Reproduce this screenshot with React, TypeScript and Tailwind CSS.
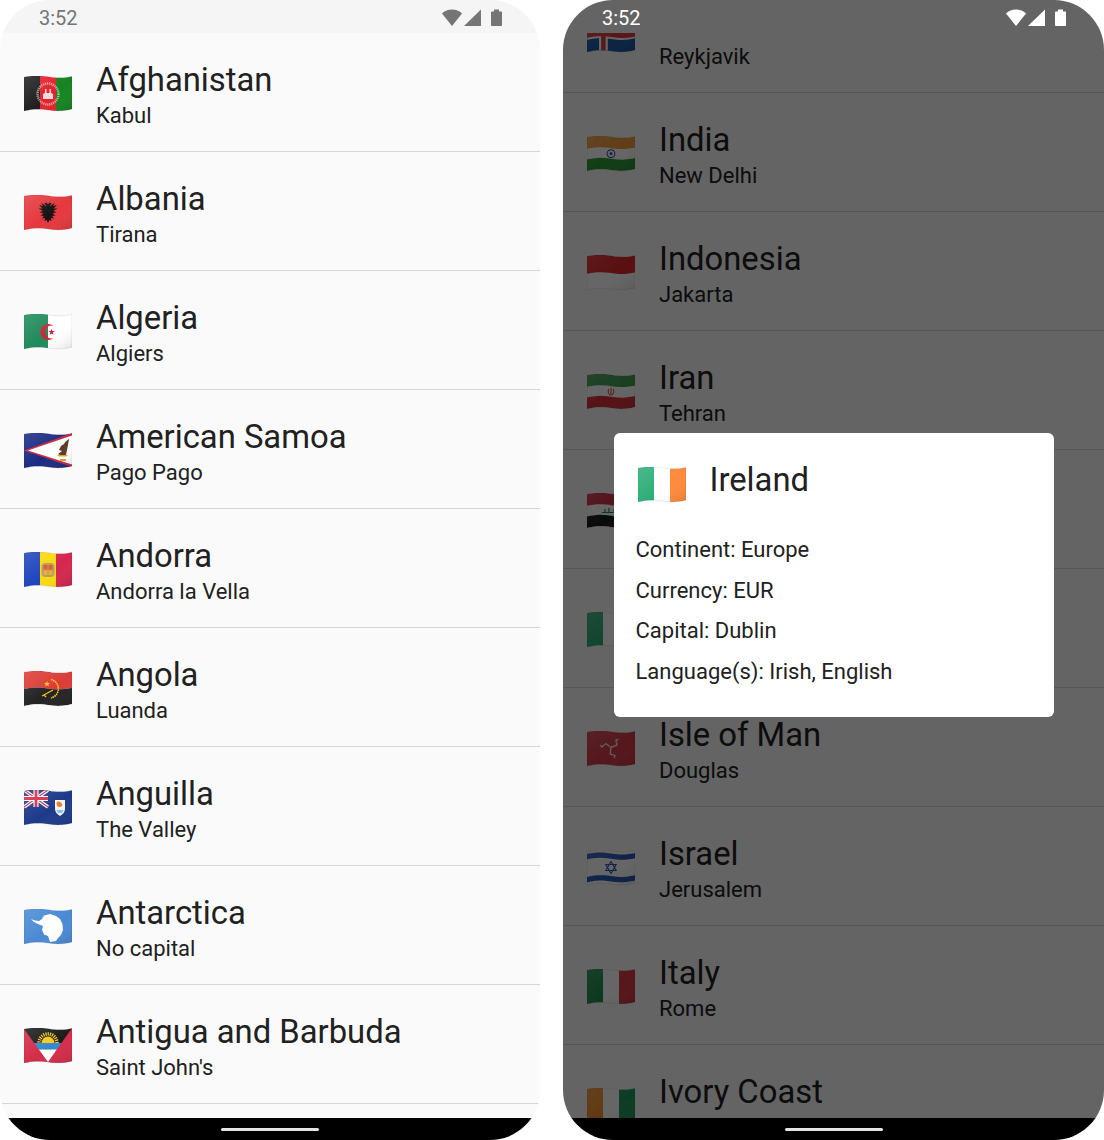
import type { ReactNode } from 'react';

// wave edges of the flag, in a 48x36 box
const wave = (x: number) => Math.sin((x / 48) * Math.PI * 2);
const topEdge = (x: number) => 1.2 - 1.2 * wave(x) - x * 0.015;
const bottomEdge = (x: number) => 35 - 1.3 * wave(x) - x * 0.04;

const edge = (t: number, x: number) => topEdge(x) + (bottomEdge(x) - topEdge(x)) * t;

function band(t0: number, t1: number) {
    const xs = Array.from({ length: 25 }, (_, i) => i * 2);
    const upper = xs.map((x) => `${x} ${edge(t0, x).toFixed(2)}`).join(' L');
    const lower = [...xs].reverse().map((x) => `${x} ${edge(t1, x).toFixed(2)}`).join(' L');
    return `M${upper} L${lower} Z`;
}

const outline = band(0, 1);

function Flag({ id, bg, children }: { id: string; bg?: string; children?: ReactNode }) {
    return (
        <svg viewBox="0 0 48 36" className="w-12 h-9 shrink-0">
            <defs>
                <clipPath id={`clip-${id}`}>
                    <path d={outline} />
                </clipPath>
                <linearGradient id={`shade-${id}`} x1="0" y1="0" x2="1" y2="1">
                    <stop offset="0" stopColor="#fff" stopOpacity="0.14" />
                    <stop offset="0.55" stopColor="#fff" stopOpacity="0" />
                    <stop offset="1" stopColor="#000" stopOpacity="0.12" />
                </linearGradient>
            </defs>
            <g clipPath={`url(#clip-${id})`}>
                <rect width="48" height="36" fill={bg ?? '#fff'} />
                {children}
                <rect width="48" height="36" fill={`url(#shade-${id})`} />
            </g>
            <path d={outline} fill="none" stroke="#000" strokeOpacity="0.12" strokeWidth="0.7" />
        </svg>
    );
}

function Bars({ colors }: { colors: string[] }) {
    return (
        <>
            {colors.map((c, i) => (
                <rect key={i} x={i * 16} width="16.2" height="36" fill={c} />
            ))}
        </>
    );
}

function Stripes({ stops }: { stops: [number, number, string][] }) {
    return (
        <>
            {stops.map(([a, b, c], i) => (
                <path key={i} d={band(a, b)} fill={c} />
            ))}
        </>
    );
}

const eagleHalf =
    'M24 28L22.5 25 20.5 26 21 23 18 23.5 20 21 16.5 20.5 19.5 18.5 15.5 17 19 16 14.5 13.5 18.5 13.5 15 10 19 11 17 7.5 21 10.5 22 12 21.5 9.5 20 9 22 7.5 23.5 8.5 24 10Z';
const manLeg = 'M24 16.5L30 14 29 9 31.5 8.5';

const flags: Record<string, (id: string) => ReactNode> = {
    afghanistan: (id) => (
        <Flag id={id}>
            <Bars colors={['#1f1f1f', '#e8202a', '#15841f']} />
            <circle cx="24" cy="18" r="10.5" fill="none" stroke="#d2d2d2" strokeOpacity="0.75" strokeWidth="2.4" strokeDasharray="1.2 0.8" />
            <path d="M19 23h10v-5l-2-1v-4h-1.5v4h-3v-4H21v4l-2 1z" fill="#f5dcdc" />
        </Flag>
    ),
    albania: (id) => (
        <Flag id={id} bg="#e5383d">
            <path d={eagleHalf} fill="#141414" />
            <path d={eagleHalf} fill="#141414" transform="matrix(-1 0 0 1 48 0)" />
        </Flag>
    ),
    algeria: (id) => (
        <Flag id={id}>
            <rect width="24" height="36" fill="#1f8a5b" />
            <path d="M29.5 11.8A8 8 0 1 0 29.5 24.2A6.5 6.5 0 1 1 29.5 11.8Z" fill="#d5203a" />
            <path d="M27.5 14.8l.9 2.2 2.4.1-1.9 1.5.7 2.3-2-1.3-2 1.3.7-2.3-1.9-1.5 2.4-.1z" fill="#d5203a" />
        </Flag>
    ),
    samoa: (id) => (
        <Flag id={id} bg="#1c2a83">
            <path d="M48 0L0 17.5 48 34z" fill="#c6283f" />
            <path d="M48 2.5L4 17.5 48 31.5z" fill="#fff" />
            <path d="M45 6c-2 1-4 3-5 5l-3 2-2 4 3 1-4 3 2 1h6l1-5 1-5z" fill="#5a3a25" />
            <path d="M33 22h11l-2 1.5h-7zM36 26h6v2h-6z" fill="#d9a520" />
        </Flag>
    ),
    andorra: (id) => (
        <Flag id={id}>
            <Bars colors={['#1f45bd', '#fbd90e', '#d5264f']} />
            <rect x="17.5" y="11" width="13" height="14" rx="4" fill="#b89a6a" />
            <rect x="19.5" y="13" width="4" height="4.5" fill="#e05a2c" />
            <rect x="24.5" y="13" width="4" height="4.5" fill="#e05a2c" />
            <rect x="19.5" y="18.5" width="4" height="4.5" fill="#e8b030" />
            <rect x="24.5" y="18.5" width="4" height="4.5" fill="#e8b030" />
        </Flag>
    ),
    angola: (id) => (
        <Flag id={id}>
            <Stripes stops={[[0, 0.5, '#dc3c36'], [0.5, 1, '#232323']]} />
            <path d="M27 8.5a9.5 9.5 0 0 1 0 18.5" fill="none" stroke="#f5c518" strokeWidth="1.6" strokeDasharray="1.6 0.6" />
            <path d="M18 25l11-6M20 24l2 2" stroke="#f5c518" strokeWidth="1.4" fill="none" />
            <path d="M23 10l.8 2 2.2.1-1.7 1.3.6 2.1-1.9-1.2-1.9 1.2.6-2.1-1.7-1.3 2.2-.1z" fill="#f5c518" />
        </Flag>
    ),
    anguilla: (id) => (
        <Flag id={id} bg="#1d3a8a">
            <rect width="24" height="17" fill="#2a3f8f" />
            <path d="M0 0l24 17M24 0L0 17" stroke="#fff" strokeWidth="3.4" />
            <path d="M0 0l24 17M24 0L0 17" stroke="#d8304a" strokeWidth="1.2" />
            <path d="M12 0v17M0 8.5h24" stroke="#fff" strokeWidth="5" />
            <path d="M12 0v17M0 8.5h24" stroke="#d8304a" strokeWidth="2.8" />
            <path d="M31 10h10v9c0 3-2 5-5 7-3-2-5-4-5-7z" fill="#f5f5f5" />
            <path d="M33 12c2-1 4 0 5 2s-1 3-3 3-3-3-2-5z" fill="#e8842c" />
            <path d="M32.5 20h7l-1.5 3h-4z" fill="#8ac0e8" />
        </Flag>
    ),
    antarctica: (id) => (
        <Flag id={id} bg="#4a8ad4">
            <path d="M7 10L11 11.5 15 12 18 10 20 6.5 26 5 32 7 36 10 38.5 15 39 21 37 26 34 29 32 32 26 33 25 30 24 27 20 25.5 18 21 19 17 14 15 10 13Z" fill="#fff" />
        </Flag>
    ),
    antigua: (id) => (
        <Flag id={id} bg="#1c1c1c">
            <circle cx="24" cy="15" r="9" fill="none" stroke="#f8c91c" strokeWidth="3.5" strokeDasharray="1.2 1" />
            <circle cx="24" cy="15" r="6.5" fill="#f8c91c" />
            <rect y="15" width="48" height="6.5" fill="#2f8bd4" />
            <rect y="21.5" width="48" height="15" fill="#fff" />
            <path d="M0 1l24 33L48 0v36H0z" fill="#d42c48" />
        </Flag>
    ),
    iceland: (id) => (
        <Flag id={id} bg="#1d5aa8">
            <Stripes stops={[[0.36, 0.64, '#fff']]} />
            <rect x="12" width="8.8" height="36" fill="#fff" />
            <Stripes stops={[[0.42, 0.58, '#e0393e']]} />
            <rect x="14.2" width="4.4" height="36" fill="#e0393e" />
        </Flag>
    ),
    india: (id) => (
        <Flag id={id}>
            <Stripes stops={[[0, 0.34, '#f59a3a'], [0.66, 1, '#2b9a34']]} />
            <circle cx="24" cy="17.7" r="4" fill="none" stroke="#2a3f9f" strokeWidth="1" />
            <circle cx="24" cy="17.7" r="1.4" fill="#2a3f9f" />
        </Flag>
    ),
    indonesia: (id) => (
        <Flag id={id}>
            <Stripes stops={[[0, 0.52, '#e2262a']]} />
        </Flag>
    ),
    iran: (id) => (
        <Flag id={id}>
            <Stripes stops={[[0, 0.34, '#3f9d52'], [0.66, 1, '#d8303a']]} />
            <path d="M24 14v8M21.7 15c-1 2-.6 5 1.3 6M26.3 15c1 2 .6 5-1.3 6" stroke="#d8303a" strokeWidth="1" fill="none" />
        </Flag>
    ),
    iraq: (id) => (
        <Flag id={id}>
            <Stripes stops={[[0, 0.34, '#d12a40'], [0.66, 1, '#1a1a1a']]} />
            <path d="M15 19.5h18M18 16v3M22 15v4M27 15.5v4M31 16v3" stroke="#1e8a4a" strokeWidth="1.2" fill="none" />
        </Flag>
    ),
    ireland: (id) => (
        <Flag id={id}>
            <Bars colors={['#2fae78', '#ffffff', '#ff8a3c']} />
        </Flag>
    ),
    isleofman: (id) => (
        <Flag id={id} bg="#d63a48">
            <g fill="none" stroke="#f0e4d8" strokeWidth="1.4">
                <path d={manLeg} />
                <path d={manLeg} transform="rotate(120 24 16.5)" />
                <path d={manLeg} transform="rotate(240 24 16.5)" />
            </g>
        </Flag>
    ),
    israel: (id) => (
        <Flag id={id}>
            <Stripes stops={[[0.08, 0.24, '#2a55b8'], [0.76, 0.92, '#2a55b8']]} />
            <path d="M24 11.5l5.2 9h-10.400zM24 23.5l-5.200-9h10.400z" fill="none" stroke="#2a55b8" strokeWidth="1.1" />
        </Flag>
    ),
    italy: (id) => (
        <Flag id={id}>
            <Bars colors={['#1f8f4f', '#ffffff', '#d93a46']} />
        </Flag>
    ),
    ivorycoast: (id) => (
        <Flag id={id}>
            <Bars colors={['#f5912a', '#ffffff', '#1f9a5a']} />
        </Flag>
    ),
};

const leftList = [
    ['afghanistan', 'Afghanistan', 'Kabul'],
    ['albania', 'Albania', 'Tirana'],
    ['algeria', 'Algeria', 'Algiers'],
    ['samoa', 'American Samoa', 'Pago Pago'],
    ['andorra', 'Andorra', 'Andorra la Vella'],
    ['angola', 'Angola', 'Luanda'],
    ['anguilla', 'Anguilla', 'The Valley'],
    ['antarctica', 'Antarctica', 'No capital'],
    ['antigua', 'Antigua and Barbuda', "Saint John's"],
];

const rightList = [
    ['iceland', 'Iceland', 'Reykjavik'],
    ['india', 'India', 'New Delhi'],
    ['indonesia', 'Indonesia', 'Jakarta'],
    ['iran', 'Iran', 'Tehran'],
    ['iraq', 'Iraq', 'Baghdad'],
    ['ireland', 'Ireland', 'Dublin'],
    ['isleofman', 'Isle of Man', 'Douglas'],
    ['israel', 'Israel', 'Jerusalem'],
    ['italy', 'Italy', 'Rome'],
    ['ivorycoast', 'Ivory Coast', 'Yamoussoukro'],
];

function CountryRow({ flag, name, capital }: { flag: string; name: string; capital: string }) {
    return (
        <div className="h-[119px] flex items-center gap-6 pl-6 border-b-[1.5px] border-[#d6d6d6]">
            <div className="mt-1">{flags[flag](`row-${flag}`)}</div>
            <div className="flex flex-col mt-[6px]">
                <span className="text-[32.8px] leading-[40px] mb-[1px] text-[#212121]">{name}</span>
                <span className="text-[22px] leading-[30px] text-[#212121]">{capital}</span>
            </div>
        </div>
    );
}

function StatusBar({ light }: { light?: boolean }) {
    const color = light ? '#ffffff' : '#757575';
    return (
        <div className={`h-[33px] shrink-0 flex items-center pl-[39px] pr-[38px] ${light ? 'bg-[#646464]' : 'bg-[#f5f5f5]'}`}>
            <span className={`text-[20px] leading-none pt-[3px] ${light ? 'text-white' : 'text-[#757575]'}`}>3:52</span>
            <svg viewBox="0 0 60 18" className="ml-auto mt-[2px] w-[60px] h-[18px]" fill={color}>
                <path d="M0 4.5C2.5 1.8 6 .5 10 .5s7.5 1.3 10 4L10 17z" />
                <path d="M22 17L39 .5V17z" />
                <path d="M49 3.5c0-.6.4-1 1-1h2V.5h5v2h2c.6 0 1 .4 1 1V16c0 .6-.4 1-1 1h-9c-.6 0-1-.4-1-1z" />
            </svg>
        </div>
    );
}

function NavBar() {
    return (
        <div className="h-[22px] shrink-0 bg-black flex justify-center pt-[10px]">
            <div className="w-[98px] h-[3px] rounded-full bg-[#e4e4e4]" />
        </div>
    );
}

function Dialog() {
    return (
        <div className="w-[440px] h-[284px] bg-white rounded-[6px] flex flex-col pl-[22px] pt-[27px] text-[#212121]">
            <div className="flex items-start gap-6 pl-[2px]">
                <div className="mt-[7px]">{flags.ireland('dialog-ireland')}</div>
                <span className="text-[32.8px] leading-[40px]">Ireland</span>
            </div>
            <div className="mt-[27px] flex flex-col text-[22px] leading-[40.5px]">
                <span>Continent: Europe</span>
                <span>Currency: EUR</span>
                <span>Capital: Dublin</span>
                <span>Language(s): Irish, English</span>
            </div>
        </div>
    );
}

export default function App() {
    return (
        <div className="w-[1104px] h-[1140px] bg-white flex gap-[23px] font-['Roboto',sans-serif]">
            <div className="w-[540px] h-full rounded-[50px] overflow-hidden flex flex-col bg-[#fafafa]">
                <StatusBar />
                <div className="flex-1 overflow-hidden">
                    {leftList.map(([f, n, c]) => (
                        <CountryRow key={f} flag={f} name={n} capital={c} />
                    ))}
                </div>
                <NavBar />
            </div>

            <div className="w-[541px] h-full rounded-[50px] overflow-hidden flex flex-col bg-[#fafafa]">
                <StatusBar light />
                <div className="relative flex-1 overflow-hidden">
                    <div className="-mt-[59px]">
                        {rightList.map(([f, n, c]) => (
                            <CountryRow key={f} flag={f} name={n} capital={c} />
                        ))}
                    </div>
                    <div className="absolute inset-0 bg-black/60 flex items-center justify-center pb-[1px]">
                        <Dialog />
                    </div>
                </div>
                <NavBar />
            </div>
        </div>
    );
}
